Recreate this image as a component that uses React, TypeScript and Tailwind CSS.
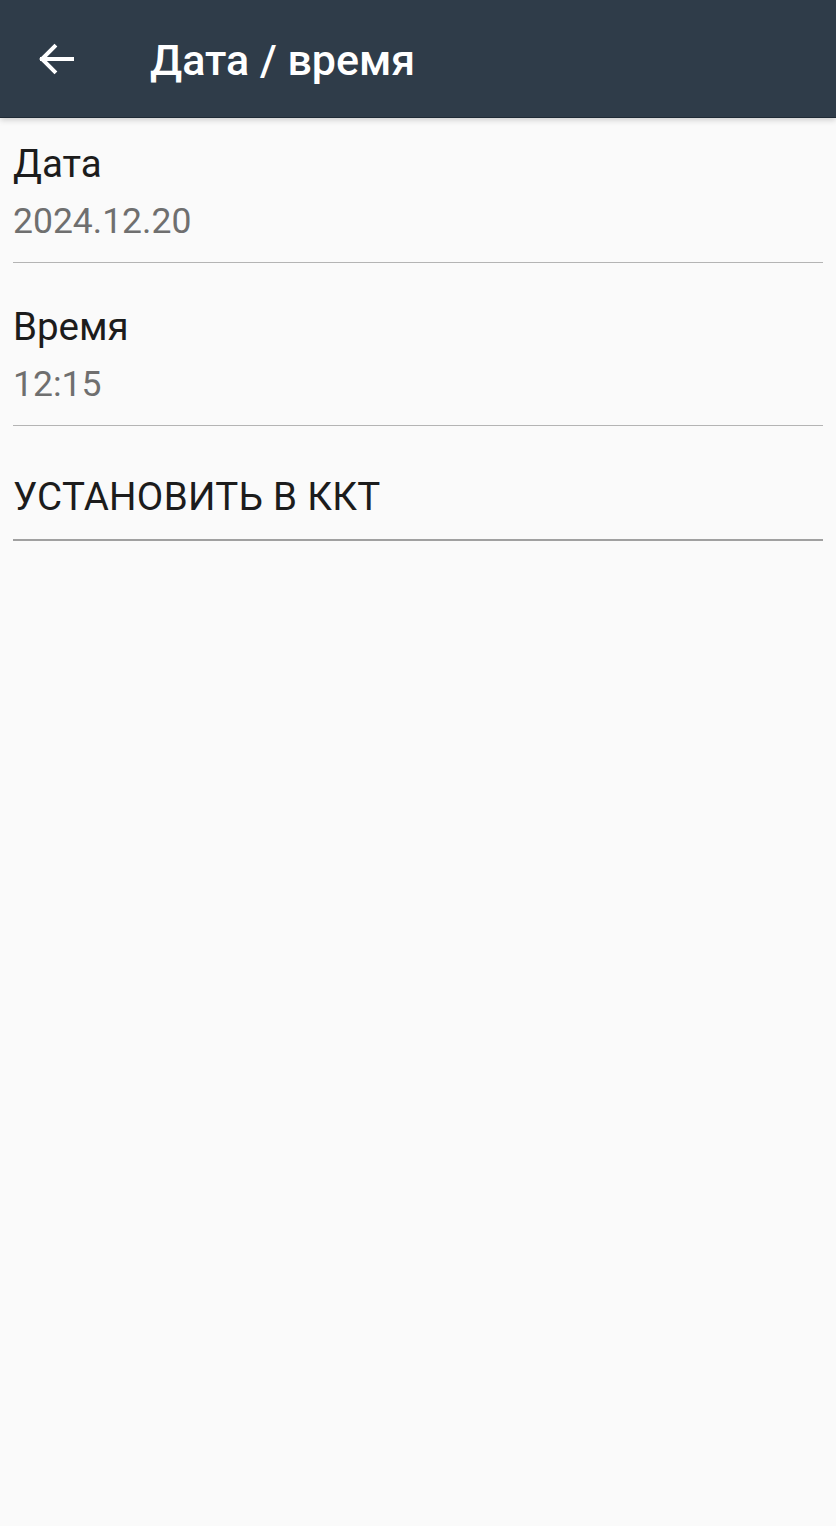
import React from "react";

function BackArrow() {
  return (
    <svg width="36" height="32" viewBox="0 0 36 32" fill="none">
      <path d="M34 16H4M16.5 3.5L4 16l12.5 12.5" stroke="#ffffff" strokeWidth="4" strokeLinecap="square" strokeLinejoin="miter" />
    </svg>
  );
}

function Pref({ title, value, pt }: { title: string; value: string; pt: string }) {
  return (
    <div className={`mx-[13px] border-b border-[#b4b4b4] ${pt} pb-[21px]`}>
      <div className="text-[38.5px] leading-[44px] text-[#1c1c1c]">{title}</div>
      <div className="mt-[15px] text-[35.5px] leading-[40px] text-[#6f6f6f]">{value}</div>
    </div>
  );
}

export default function App() {
  return (
    <div
      className="min-h-[1526px] w-[836px] bg-[#fafafa]"
      style={{ fontFamily: "Roboto, 'Noto Sans', sans-serif" }}
    >
      <div className="relative z-10 flex h-[118px] items-center border-b border-[#1f2a35] bg-[#2f3c49] shadow-[0_2px_6px_rgba(0,0,0,0.18)]">
        <div className="ml-[38px] flex h-[32px] w-[36px] items-center">
          <BackArrow />
        </div>
        <div className="ml-[76px] mt-[2px] text-[43px] font-medium leading-[50px] text-white">Дата / время</div>
      </div>
      <Pref title="Дата" value="2024.12.20" pt="pt-[24px]" />
      <Pref title="Время" value="12:15" pt="pt-[42px]" />
      <div className="mx-[13px] border-b-2 border-[#a0a0a0] pt-[49px] pb-[20px]">
        <div className="text-[38.5px] leading-[44px] tracking-[0.3px] text-[#1c1c1c]">УСТАНОВИТЬ В ККТ</div>
      </div>
    </div>
  );
}
